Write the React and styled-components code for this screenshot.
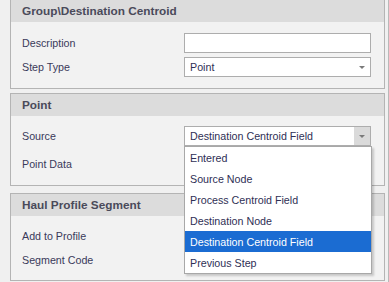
import React from 'react'
import styled, { createGlobalStyle } from 'styled-components'

const GlobalStyle = createGlobalStyle`
    html, body {
        margin: 0;
        padding: 0;
        background: #f0f0f0;
        font-family: "Liberation Sans", Arial, sans-serif;
        overflow: hidden;
    }
`

const Frame = styled.div`
    width: 375px;
    height: 282px;
    padding: 0 3px 0 10px;
    border-right: 1px solid #b9b9b9;
    display: flex;
    flex-direction: column;
    overflow: hidden;
`

const Stack = styled.div`
    margin-top: -1px;
    display: flex;
    flex-direction: column;
`

const Panel = styled.section`
    position: relative;
    margin-top: ${(p) => p.$gap || 0}px;
    border: 1px solid #b4b4b4;
    background: #f2f2f2;
`

const PanelHeader = styled.div`
    height: 22px;
    background: #dcdcdc;
    padding-left: 11px;
    display: flex;
    align-items: center;
    font-weight: bold;
    font-size: 11.8px;
    color: #4a4a5a;
`

const PanelBody = styled.div`
    padding: ${(p) => p.$top || 11}px 10px ${(p) => p.$bottom || 11}px 11px;
    display: flex;
    flex-direction: column;
    gap: ${(p) => p.$gap || 4}px;
`

const Row = styled.div`
    display: grid;
    grid-template-columns: 162px 187px;
    align-items: center;
    height: 20px;
`

const Label = styled.span`
    font-size: 10.7px;
    color: #3a3a5a;
`

const Field = styled.div`
    position: relative;
    box-sizing: border-box;
    height: 20px;
    border: 1px solid #adadad;
    background: #ffffff;
    display: flex;
    align-items: center;
    padding-left: 5px;
    font-size: 10.7px;
    color: #2f2f55;
`

const Arrow = styled.span`
    margin-left: auto;
    align-self: stretch;
    width: 16px;
    display: flex;
    align-items: center;
    justify-content: center;
    background: ${(p) => (p.$open ? '#dadada' : 'transparent')};
    &::after {
        content: '';
        border-left: 3.5px solid transparent;
        border-right: 3.5px solid transparent;
        border-top: 3.5px solid #7a7a7a;
        margin-top: 1px;
    }
`

const DropList = styled.ul`
    position: absolute;
    left: -1px;
    top: 19px;
    width: 186px;
    margin: 0;
    padding: 0;
    list-style: none;
    background: #ffffff;
    border: 1px solid #a8a8a8;
    box-shadow: 2px 2px 2px rgba(0, 0, 0, 0.18);
    z-index: 5;
`

const Item = styled.li`
    height: 21px;
    display: flex;
    align-items: center;
    padding-left: 5px;
    font-size: 10.7px;
    color: ${(p) => (p.$active ? '#ffffff' : '#2f2f55')};
    background: ${(p) => (p.$active ? '#1b6cd2' : 'transparent')};
`

const sourceOptions = [
    'Entered',
    'Source Node',
    'Process Centroid Field',
    'Destination Node',
    'Destination Centroid Field',
    'Previous Step',
]

function Combo({ value, open, options }) {
    return (
        <Field>
            {value}
            <Arrow $open={open} />
            {open && (
                <DropList>
                    {options.map((o) => (
                        <Item key={o} $active={o === value}>{o}</Item>
                    ))}
                </DropList>
            )}
        </Field>
    )
}

export default function App() {
    return (
        <Frame>
            <GlobalStyle />
            <Stack>
                <Panel>
                    <PanelHeader>Group\Destination Centroid</PanelHeader>
                    <PanelBody>
                        <Row>
                            <Label>Description</Label>
                            <Field />
                        </Row>
                        <Row>
                            <Label>Step Type</Label>
                            <Combo value="Point" />
                        </Row>
                    </PanelBody>
                </Panel>
                <Panel $gap={4} style={{ zIndex: 2 }}>
                    <PanelHeader>Point</PanelHeader>
                    <PanelBody $top={10} $gap={8} $bottom={11}>
                        <Row>
                            <Label>Source</Label>
                            <Combo value="Destination Centroid Field" open options={sourceOptions} />
                        </Row>
                        <Row>
                            <Label>Point Data</Label>
                        </Row>
                    </PanelBody>
                </Panel>
                <Panel $gap={7}>
                    <PanelHeader>Haul Profile Segment</PanelHeader>
                    <PanelBody $top={10} $bottom={10}>
                        <Row>
                            <Label>Add to Profile</Label>
                        </Row>
                        <Row>
                            <Label>Segment Code</Label>
                        </Row>
                    </PanelBody>
                </Panel>
            </Stack>
        </Frame>
    )
}
